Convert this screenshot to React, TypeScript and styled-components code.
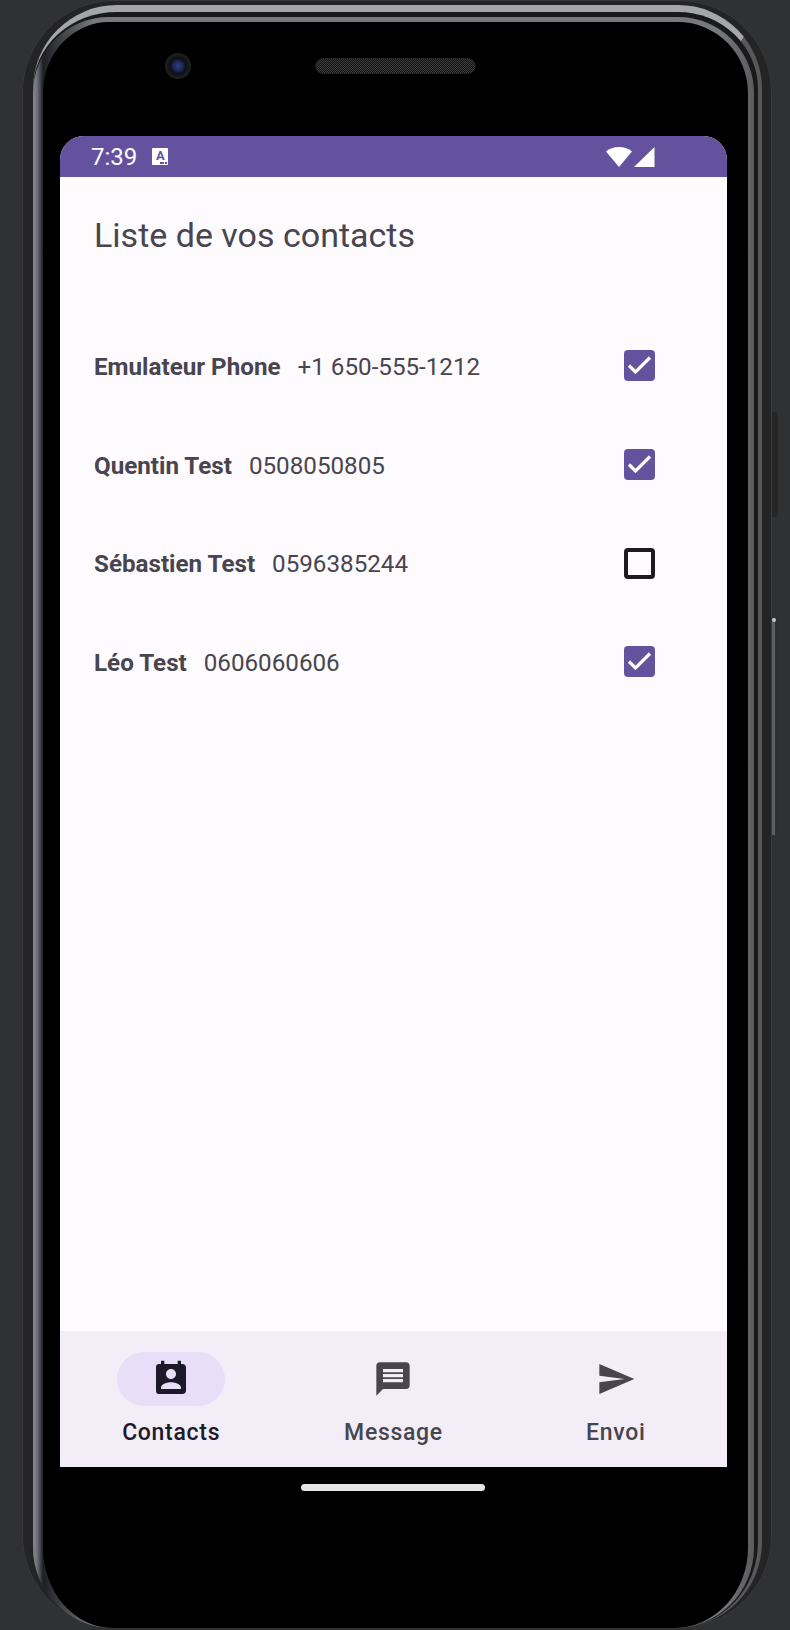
import React from 'react';
import styled, { createGlobalStyle } from 'styled-components';
import { MdMessage, MdPermContactCalendar, MdSend } from 'react-icons/md';

const GlobalStyle = createGlobalStyle`
  * { box-sizing: border-box; }
  html, body {
    margin: 0;
    width: 790px;
    height: 1630px;
    overflow: hidden;
    background: #2f3133;
    font-family: Roboto, "Liberation Sans", sans-serif;
  }
`

const Shell = styled.div`
  position: relative;
  width: 750px;
  height: 1628px;
  margin-left: 22px;
  padding: 5px 10px 0 11px;
  border-radius: 92px 92px 92px 92px;
  background: #242425;
  box-shadow: inset 0 0 0 1px #3a3a3c;
`
const SideButton = styled.div<{ $top: number; $height: number; $shine?: boolean }>`
  position: absolute;
  left: 750px;
  top: ${props => props.$top}px;
  width: 6px;
  height: ${props => props.$height}px;
  border-radius: 0 3px 3px 0;
  background: ${props => props.$shine
    ? 'linear-gradient(90deg, #5e5e60 0, #5e5e60 3px, #2e2f31 3px)'
    : '#262627'};
  &::before {
    content: '';
    display: ${props => props.$shine ? 'block' : 'none'};
    width: 4px;
    height: 4px;
    border-radius: 50%;
    background: #c4c4c4;
  }
`
const Rim = styled.div`
  height: 100%;
  padding: 5px 4px 0 0;
  border-top: 7px solid #a4a6a8;
  border-right: 4px solid #58585b;
  border-radius: 84px 84px 86px 86px;
  background: #19191a;
`
const Bezel = styled.div`
  display: flex;
  flex-direction: column;
  align-items: flex-start;
  height: 100%;
  border-style: solid;
  border-color: transparent;
  border-width: 5px 6px 0 10px;
  border-radius: 76px 76px 80px 80px;
  background:
    linear-gradient(#000, #000) padding-box,
    linear-gradient(90deg, #84878c 0, #6f7277 4px, #1e1f22 10px, #77797c 60px, #77797c 95%, #5c5c5f 100%) border-box;
`
const Earpiece = styled.div`
  display: flex;
  align-items: center;
  height: 114px;
  padding: 0 0 26px 122px;
`
const Camera = styled.div`
  width: 26px;
  height: 26px;
  margin-right: 124px;
  border-radius: 50%;
  background: radial-gradient(circle, #2c3f86 0, #1b2650 28%, #0d0f16 42%, #20211f 70%, #141414 100%);
`
const Speaker = styled.div`
  width: 161px;
  height: 16px;
  border-radius: 8px;
  border: 1px solid #202020;
  background: repeating-conic-gradient(#3c3c3c 0 25%, #151515 0 50%) 0 0 / 2px 2px;
`
const Screen = styled.div`
  display: flex;
  flex-direction: column;
  width: 667px;
  height: 1331px;
  margin-left: 17px;
  border-radius: 24px 24px 0 0;
  overflow: hidden;
  background: #fdfbfe;
`
const StatusBar = styled.div`
  display: flex;
  align-items: center;
  height: 41px;
  padding: 0 72px 0 31px;
  background: #65529f;
  color: #fff;
`
const Clock = styled.span`
  padding-top: 2px;
  font-size: 24px;
  line-height: 41px;
`
const KeyboardBadge = styled.div`
  position: relative;
  width: 16px;
  height: 17px;
  margin-left: 15px;
  border-radius: 1px;
  background: #fff;
  color: #65529f;
  font-size: 13px;
  font-weight: 700;
  line-height: 15px;
  text-align: center;
  &::after {
    content: '';
    position: absolute;
    right: 1px;
    bottom: 1px;
    width: 7px;
    height: 2px;
    background: repeating-linear-gradient(90deg, #65529f 0, #65529f 2px, #fff 2px, #fff 2.5px);
  }
`
const StatusIcons = styled.svg`
  display: block;
  margin-left: auto;
  width: 50px;
  height: 22px;
`
const Content = styled.div`
  flex: 1;
  padding: 0 72px 0 34px;
`
const Title = styled.h1`
  margin: 38px 0 61.500px;
  color: #49454f;
  font-size: 34px;
  font-weight: 400;
  line-height: 40px;
`
const Row = styled.div`
  display: flex;
  align-items: center;
  height: 98.7px;
  color: #49454f;
  font-size: 24.2px;
`
const Name = styled.span`
  margin-right: 17px;
  padding-top: 2px;
  font-weight: 700;
`
const Phone = styled.span`
  padding-top: 2px;
  font-weight: 400;
`
const CheckBox = styled.div<{ $checked: boolean }>`
  display: flex;
  align-items: center;
  justify-content: center;
  width: 31px;
  height: 31px;
  margin-left: auto;
  border-radius: 4px;
  border: ${props => props.$checked ? 'none' : '4px solid #1c1b1f'};
  background: ${props => props.$checked ? '#65529f' : 'transparent'};
`
const Nav = styled.div`
  display: grid;
  grid-template-columns: repeat(3, 1fr);
  height: 136px;
  padding-top: 21px;
  background: #f2edf7;
`
const NavItem = styled.div<{ $active?: boolean }>`
  display: flex;
  flex-direction: column;
  align-items: center;
  color: ${props => props.$active ? '#1d192b' : '#49454f'};
`
const NavPill = styled.div<{ $active?: boolean }>`
  display: flex;
  align-items: center;
  justify-content: center;
  width: 108px;
  height: 54px;
  border-radius: 27px;
  background: ${props => props.$active ? '#e8def8' : 'transparent'};
  font-size: 40px;
`
const NavLabel = styled.span`
  margin-top: 12px;
  font-size: 23px;
  font-weight: 500;
  line-height: 30px;
  letter-spacing: 0.7px;
`
const HomeBar = styled.div`
  width: 184px;
  height: 7px;
  margin: 17px 0 0 258px;
  border-radius: 4px;
  background: #e6e6e6;
`

const contacts = [
  { name: 'Emulateur Phone', phone: '+1 650-555-1212', checked: true },
  { name: 'Quentin Test', phone: '0508050805', checked: true },
  { name: 'Sébastien Test', phone: '0596385244', checked: false },
  { name: 'Léo Test', phone: '0606060606', checked: true },
];

function App() {
  return (
    <>
      <GlobalStyle />
      <Shell>
        <SideButton $top={412} $height={105} />
        <SideButton $top={618} $height={217} $shine />
        <Rim>
          <Bezel>
            <Earpiece>
              <Camera />
              <Speaker />
            </Earpiece>
            <Screen>
              <StatusBar>
                <Clock>7:39</Clock>
                <KeyboardBadge>A</KeyboardBadge>
                <StatusIcons viewBox="0 0 50 22">
                  <path d="M1 5.500C4.500 2.500 8.500 1 14 1S23.500 2.500 27 5.500L14 21Z" fill="#fff" />
                  <path d="M29 21 49.500 1V21Z" fill="#fff" />
                </StatusIcons>
              </StatusBar>
              <Content>
                <Title>Liste de vos contacts</Title>
                {contacts.map(c => (
                  <Row key={c.name}>
                    <Name>{c.name}</Name>
                    <Phone>{c.phone}</Phone>
                    <CheckBox $checked={c.checked}>
                      {c.checked && (
                        <svg width="31" height="31" viewBox="0 0 31 31">
                          <path d="M5 15.500 11.500 22 26 7.500" fill="none" stroke="#fff" strokeWidth="3.200" />
                        </svg>
                      )}
                    </CheckBox>
                  </Row>
                ))}
              </Content>
              <Nav>
                <NavItem $active>
                  <NavPill $active><MdPermContactCalendar /></NavPill>
                  <NavLabel>Contacts</NavLabel>
                </NavItem>
                <NavItem>
                  <NavPill><MdMessage /></NavPill>
                  <NavLabel>Message</NavLabel>
                </NavItem>
                <NavItem>
                  <NavPill><MdSend /></NavPill>
                  <NavLabel>Envoi</NavLabel>
                </NavItem>
              </Nav>
            </Screen>
            <HomeBar />
          </Bezel>
        </Rim>
      </Shell>
    </>
  )
}

export default App;
